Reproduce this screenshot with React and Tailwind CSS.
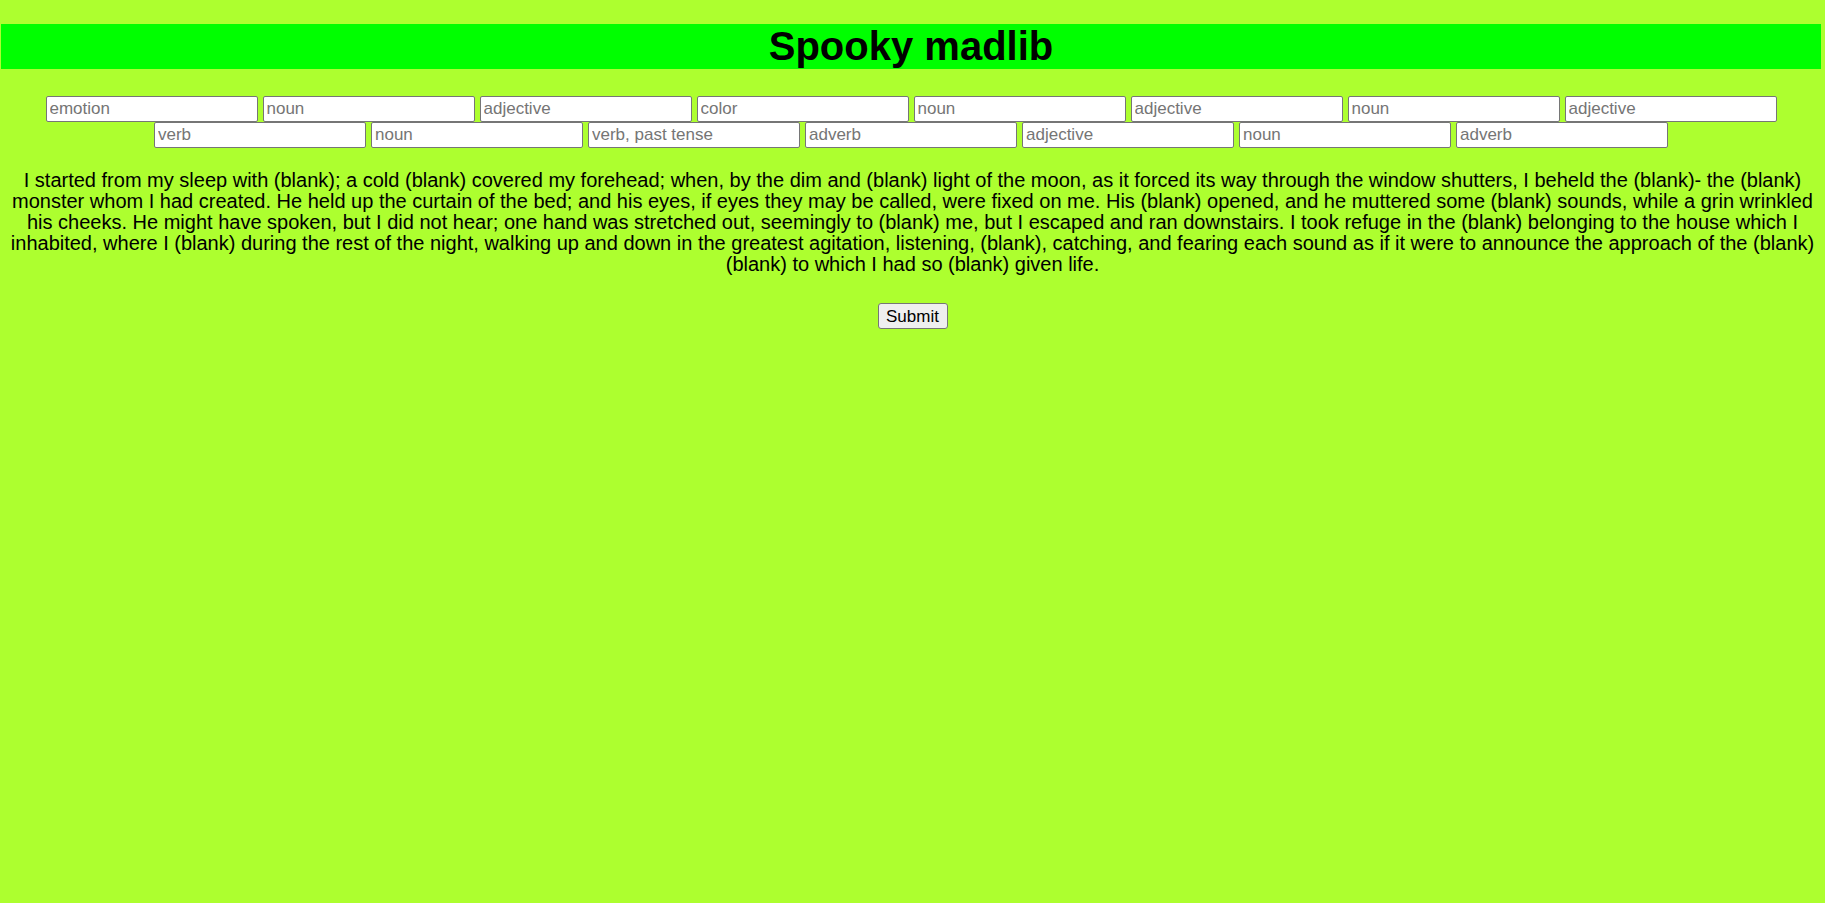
import React, { useState } from "react"

// Spooky madlib — fill in the blanks, then submit
const BLANKS = [
  "emotion", "noun", "adjective", "color", "noun", "adjective", "noun", "adjective",
  "verb", "noun", "verb, past tense", "adverb", "adjective", "noun", "adverb",
]

const STORY = "I started from my sleep with (blank); a cold (blank) covered my forehead; when, by the dim and (blank) light of the moon, as it forced its way through the window shutters, I beheld the (blank)- the (blank) monster whom I had created. He held up the curtain of the bed; and his eyes, if eyes they may be called, were fixed on me. His (blank) opened, and he muttered some (blank) sounds, while a grin wrinkled his cheeks. He might have spoken, but I did not hear; one hand was stretched out, seemingly to (blank) me, but I escaped and ran downstairs. I took refuge in the (blank) belonging to the house which I inhabited, where I (blank) during the rest of the night, walking up and down in the greatest agitation, listening, (blank), catching, and fearing each sound as if it were to announce the approach of the (blank) (blank) to which I had so (blank) given life."

export default function App() {
  const [words, setWords] = useState(BLANKS.map(() => ""))
  const [story, setStory] = useState(STORY)

  function onSubmit() {
    let i = 0
    setStory(STORY.replace(/\(blank\)/g, () => {
      const w = words[i++]
      return w ? w : "(blank)"
    }))
  }

  return (
    <div className="min-h-screen bg-[#adff2f] pt-[24px] text-black font-['Liberation_Sans',Arial,sans-serif]">
      <h1 className="ml-[1px] mr-[4px] bg-[#00ff00] text-center text-[40px] font-bold leading-[45px]">
        Spooky madlib
      </h1>

      <div className="mt-[27px] flex flex-wrap justify-center gap-x-[5px] pr-[3px]">
        {BLANKS.map((b, idx) => (
          <input
            key={idx}
            type="text"
            placeholder={b}
            value={words[idx]}
            onChange={e => {
              const next = words.slice()
              next[idx] = e.target.value
              setWords(next)
            }}
            className="h-[26px] w-[212px] rounded-[2px] border border-[#767676] bg-white px-[3px] text-[17px] placeholder:text-[#757575] outline-none"
          />
        ))}
      </div>

      <p className="mt-[22px] px-[8px] text-center text-[20px] leading-[21px]">{story}</p>

      <div className="mt-[28px] flex justify-center">
        <button
          onClick={onSubmit}
          className="h-[26px] w-[70px] rounded-[3px] border border-[#767676] bg-[#efefef] text-[17px] leading-none"
        >
          Submit
        </button>
      </div>
    </div>
  )
}
